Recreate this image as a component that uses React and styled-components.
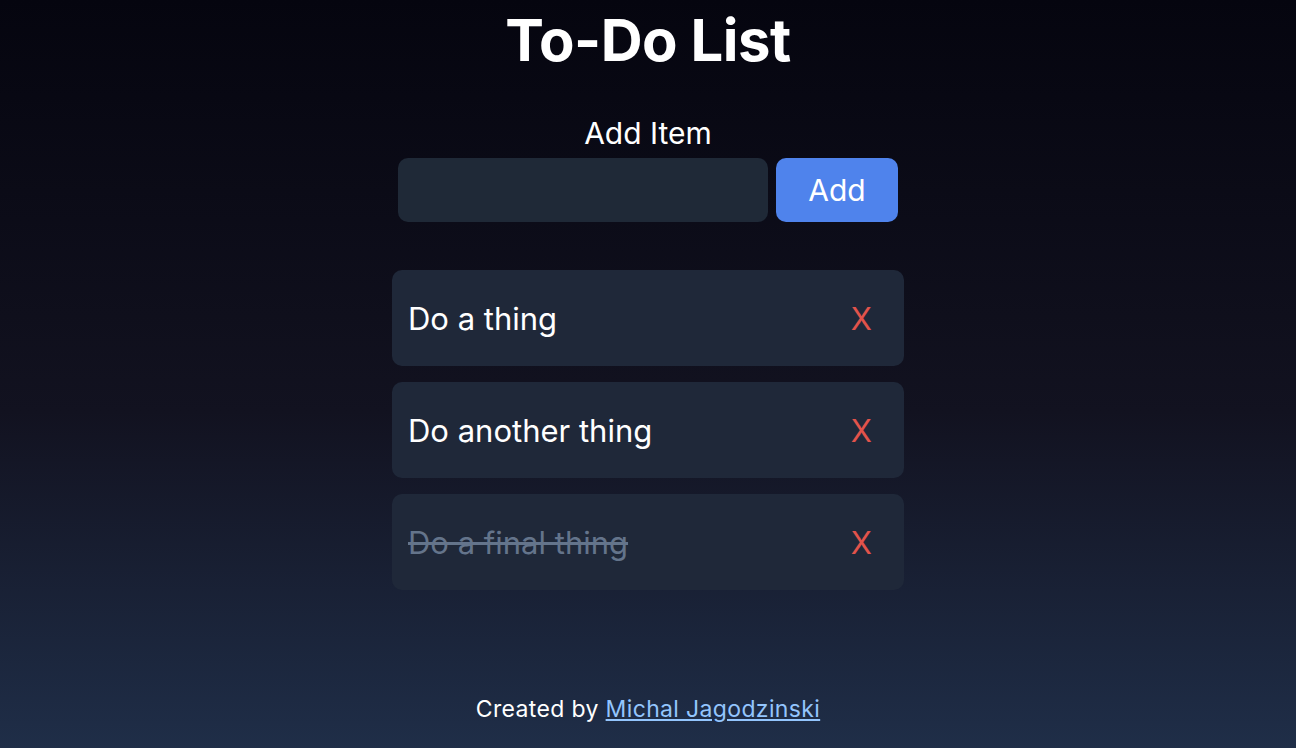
import React, { useState } from 'react';
import styled, { createGlobalStyle } from 'styled-components';

const GlobalStyle = createGlobalStyle`
  html, body {
    margin: 0;
    padding: 0;
  }
  body {
    font-family: Inter, "Noto Sans", sans-serif;
    color: white;
    background: #05050f;
  }
`;

const Page = styled.div`
  min-height: 100vh;
  display: flex;
  flex-direction: column;
  align-items: center;
  background: linear-gradient(to bottom, #05050f 0%, #121220 55%, #1f2e48 100%);
`;

const Title = styled.h1`
  margin: 5px 0 0;
  font-size: 58px;
  font-weight: 700;
  letter-spacing: -0.5px;
`;

const Label = styled.label`
  margin-top: 40px;
  font-size: 30px;
  line-height: 36px;
`;

const AddRow = styled.form`
  margin-top: 7px;
  display: flex;
  gap: 8px;
`;

const Input = styled.input`
  width: 370px;
  height: 64px;
  box-sizing: border-box;
  border: none;
  border-radius: 10px;
  background-color: #1f2937;
  color: white;
  font-family: inherit;
  font-size: 28px;
  padding: 0 16px;
  outline: none;
`;

const AddButton = styled.button`
  width: 122px;
  height: 64px;
  border: none;
  border-radius: 10px;
  background-color: #4f83ec;
  color: white;
  font-family: inherit;
  font-size: 30px;
  cursor: pointer;
`;

const List = styled.ul`
  margin: 48px 0 0;
  padding: 0;
  list-style: none;
  display: flex;
  flex-direction: column;
  gap: 16px;
  width: 512px;
`;

const Item = styled.li`
  height: 96px;
  box-sizing: border-box;
  padding: 0 16px;
  border-radius: 10px;
  background-color: #1f2839;
  display: flex;
  align-items: center;
  justify-content: space-between;
`;

const ItemText = styled.span`
  font-size: 31px;
  color: ${(p) => (p.$done ? '#64748b' : '#ffffff')};
  text-decoration: ${(p) => (p.$done ? 'line-through' : 'none')};
  cursor: pointer;
`;

const RemoveButton = styled.button`
  border: none;
  background: none;
  color: #e2534b;
  font-family: inherit;
  font-size: 31px;
  padding: 0 16px;
  cursor: pointer;
`;

const Footer = styled.footer`
  margin-top: auto;
  padding-bottom: 25px;
  font-size: 23px;
  letter-spacing: 0.35px;
`;

const Link = styled.a`
  color: #93c5fd;
  text-decoration: underline;
`;

export default function App() {
  const [items, setItems] = useState([
    { text: 'Do a thing', done: false },
    { text: 'Do another thing', done: false },
    { text: 'Do a final thing', done: true },
  ]);
  const [value, setValue] = useState('');

  const add = (e) => {
    e.preventDefault();
    if (!value.trim()) return;
    setItems([...items, { text: value, done: false }]);
    setValue('');
  };

  return (
    <Page>
      <GlobalStyle />
      <Title>To-Do List</Title>
      <Label htmlFor="new-item">Add Item</Label>
      <AddRow onSubmit={add}>
        <Input id="new-item" value={value} onChange={(e) => setValue(e.target.value)} />
        <AddButton type="submit">Add</AddButton>
      </AddRow>
      <List>
        {items.map((item, i) => (
          <Item key={i}>
            <ItemText
              $done={item.done}
              onClick={() =>
                setItems(items.map((it, j) => (j === i ? { ...it, done: !it.done } : it)))
              }
            >
              {item.text}
            </ItemText>
            <RemoveButton onClick={() => setItems(items.filter((_, j) => j !== i))}>X</RemoveButton>
          </Item>
        ))}
      </List>
      <Footer>
        Created by <Link href="#">Michal Jagodzinski</Link>
      </Footer>
    </Page>
  );
}
